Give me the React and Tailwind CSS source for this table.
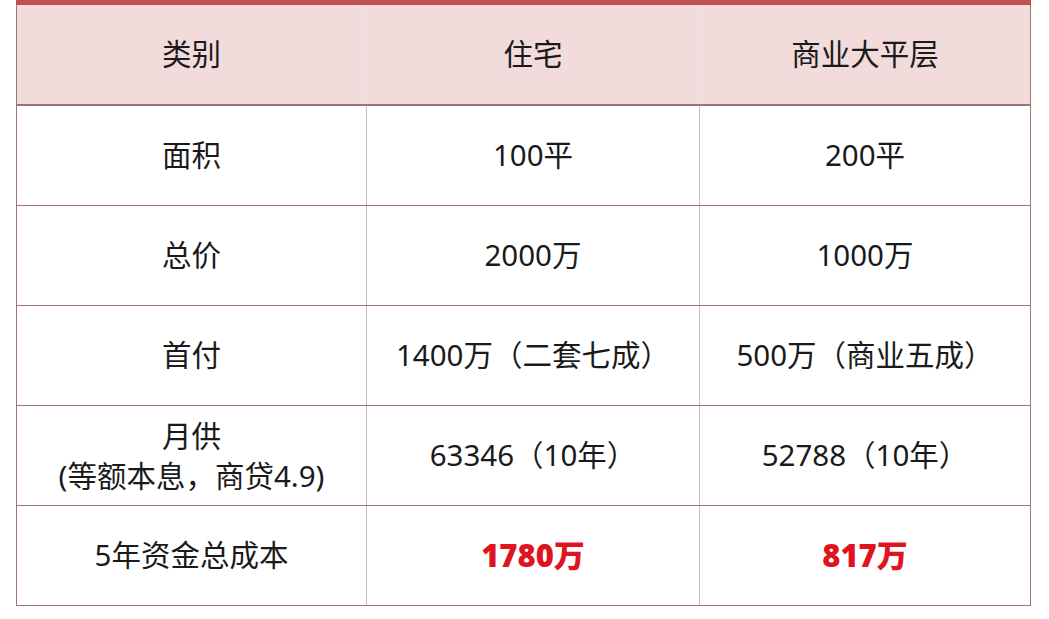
import React from "react";

const rows = [
  ["面积", "100平", "200平"],
  ["总价", "2000万", "1000万"],
  ["首付", "1400万（二套七成）", "500万（商业五成）"],
  [
    <div className="flex flex-col items-center leading-[40px]">
      <span>月供</span>
      <span>(等额本息，商贷4.9)</span>
    </div>,
    "63346（10年）",
    "52788（10年）",
  ],
  ["5年资金总成本", "1780万", "817万", true],
];

export default function App() {
  const font = { fontFamily: '"Noto Sans", "Noto Sans CJK SC", sans-serif' };
  return (
    <div className="w-[1049px] h-[619px] bg-white" style={font}>
      <div className="ml-[16px] w-[1015px] border-x border-[#a07474]">
        <div className="h-[5px] bg-[#c0504d] -mx-px"></div>
        <div className="grid grid-cols-[350px_333px_330px] h-[101px] bg-[#f2dcdb] border-b-2 border-[#a07474] text-[29.5px] text-[#1a1a1a]">
          <div className="flex items-center justify-center border-r border-[#ece4e4]">类别</div>
          <div className="flex items-center justify-center border-r border-[#ece4e4]">住宅</div>
          <div className="flex items-center justify-center">商业大平层</div>
        </div>
        {rows.map((r, i) => (
          <div
            key={i}
            className="grid grid-cols-[350px_333px_330px] h-[100px] border-b border-[#a07474] text-[29.5px] text-[#1a1a1a]"
          >
            <div className="flex items-center justify-center border-r border-[#c9bdbd]">{r[0]}</div>
            <div
              className={`flex items-center justify-center border-r border-[#c9bdbd] ${r[3] ? "font-black text-[31px] text-[#e0141e]" : ""}`}
            >
              {r[1]}
            </div>
            <div className={`flex items-center justify-center ${r[3] ? "font-black text-[31px] text-[#e0141e]" : ""}`}>
              {r[2]}
            </div>
          </div>
        ))}
      </div>
    </div>
  );
}
